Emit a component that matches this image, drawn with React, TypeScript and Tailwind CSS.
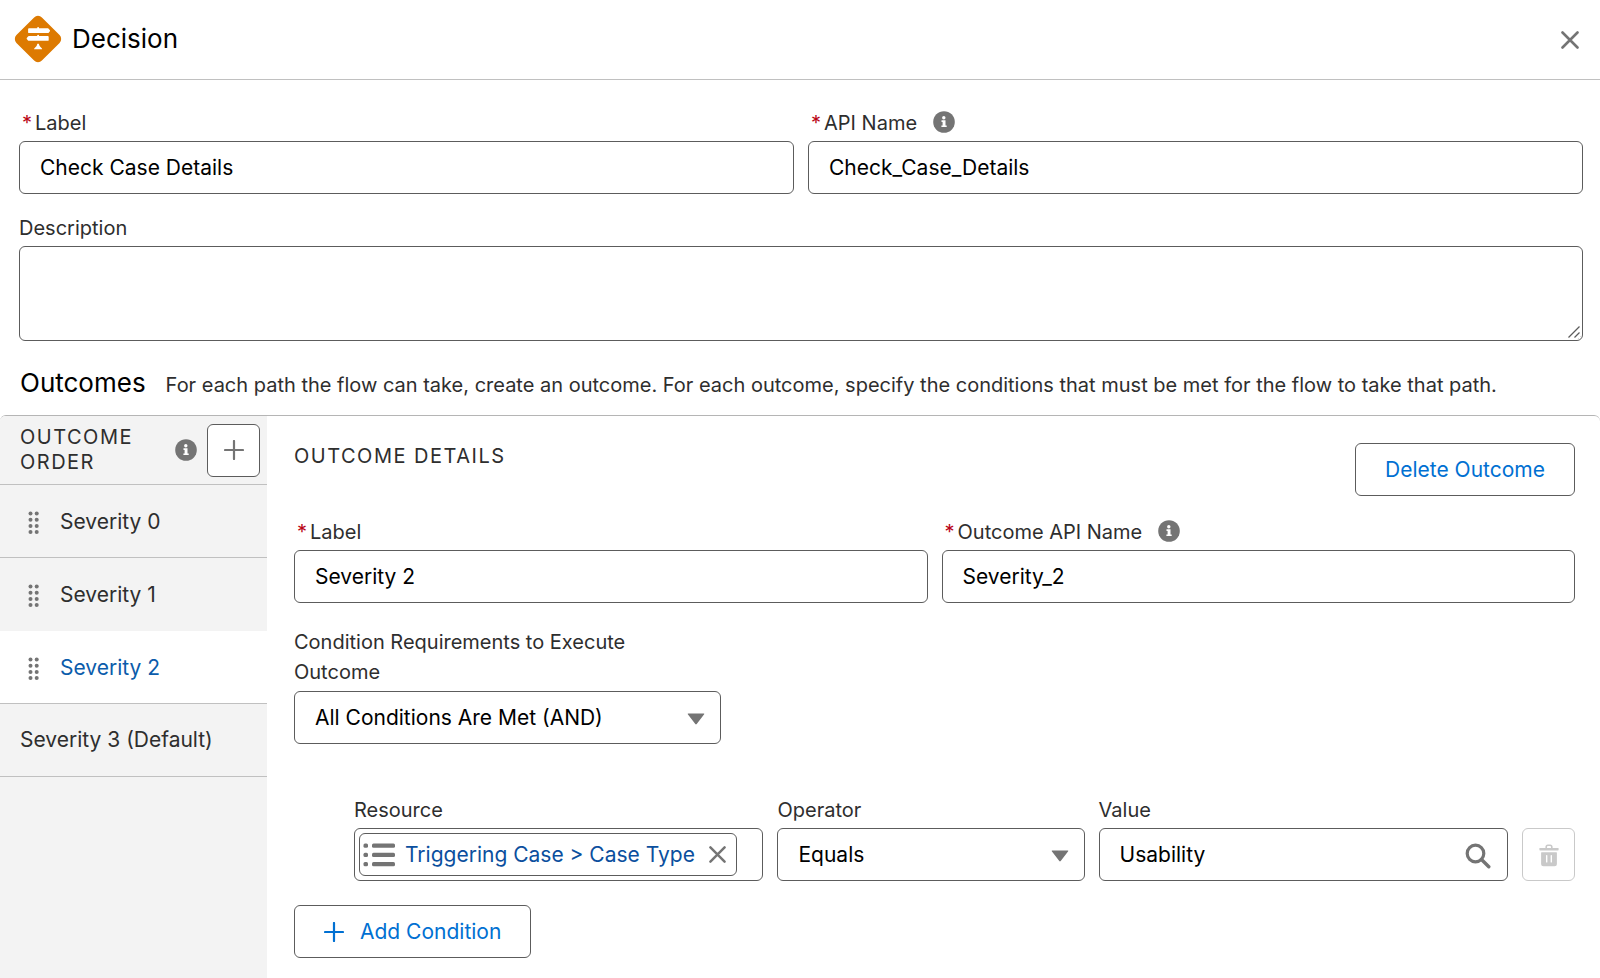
import { useState } from "react";
import type { ReactNode } from "react";

const control =
  "h-[53px] w-full rounded-md border border-[#5c5c5c] bg-white px-5 text-[21px] text-black outline-none focus:border-[#0b5cab]";

function InfoIcon() {
  return (
    <svg viewBox="0 0 22 22" className="size-[22px] shrink-0" role="img" aria-label="Help">
      <circle cx="11" cy="11" r="10.8" fill="#747474" />
      <circle cx="10.8" cy="6.8" r="1.7" fill="#fff" />
      <path d="M8.5 9.3h4v5.100h1.200v1.700H8.400v-1.700h1.200v-3.500H8.500z" fill="#fff" />
    </svg>
  );
}

function CrossIcon({ className }: { className: string }) {
  return (
    <svg viewBox="0 0 18 18" className={className} aria-hidden="true">
      <path d="M1.5 1.5l15 15M16.5 1.5l-15 15" stroke="#747474" strokeWidth="2.6" strokeLinecap="round" />
    </svg>
  );
}

function PlusIcon() {
  return (
    <svg viewBox="0 0 20 20" className="size-5 shrink-0" aria-hidden="true">
      <path d="M10 1v18M1 10h18" stroke="currentColor" strokeWidth="2.2" strokeLinecap="round" />
    </svg>
  );
}

function GripIcon() {
  return (
    <svg viewBox="0 0 12 24" className="mt-0.5 h-6 w-3 shrink-0" fill="#747474" aria-hidden="true">
      {[2.5, 8.7, 14.9, 21.1].map((y) => (
        <g key={y}>
          <circle cx="2.5" cy={y} r="2" />
          <circle cx="8.7" cy={y} r="2" />
        </g>
      ))}
    </svg>
  );
}

function DecisionIcon() {
  return (
    <svg viewBox="0 0 48 48" className="size-12 shrink-0" aria-hidden="true">
      <rect x="6" y="6" width="36" height="36" rx="5.5" fill="#dd7a01" transform="rotate(45 24 24)" />
      <g fill="#fff">
        <path d="M15 13.300h8.200v-.5q0-.8.900-.8t.9.800v.5h8.900q.5 0 .8.400l1.200 1.500q.4.500 0 1l-1.200 1.500q-.3.400-.8.400H15q-.9 0-.9-.9v-3q0-.9.9-.9z" />
        <path d="M14.800 21h8.400v-.5q0-.8.900-.8t.9.800v.5h8.800q.9 0 .9.900v3q0 .9-.9.900h-19q-.5 0-.8-.4l-1.200-1.500q-.4-.5 0-1l1.200-1.500q.3-.4.800-.4z" />
        <path d="M23.400 28.800h1.400q.4 2.700 2.700 4.100.6.400.6 1v.4h-8v-.4q0-.6.600-1 2.300-1.400 2.700-4.100z" />
      </g>
    </svg>
  );
}

function Field({ id, label, required, info, children }: { id: string; label: string; required?: boolean; info?: boolean; children: ReactNode }) {
  return (
    <div className="min-w-0">
      <div className="flex h-[30px] items-start gap-4">
        <label htmlFor={id} className={required ? "pl-[3px] text-xl leading-6" : "text-xl leading-6"}>
          {required && <span className="mr-[3px] text-[#ba0517]">*</span>}
          {label}
        </label>
        {info && <InfoIcon />}
      </div>
      {children}
    </div>
  );
}

function Select({ id, value }: { id: string; value: string }) {
  return (
    <div className="relative">
      <select id={id} className={`${control} appearance-none pr-12`} defaultValue={value}>
        <option>{value}</option>
      </select>
      <svg viewBox="0 0 18 12" className="pointer-events-none absolute top-[22px] right-4 h-3 w-[18px]" aria-hidden="true">
        <path d="M1.200.5h15.600q.8 0 .4.700l-7.500 9.800q-.7.800-1.400 0L.8 1.200q-.4-.7.400-.7z" fill="#747474" />
      </svg>
    </div>
  );
}

const outcomes = ["Severity 0", "Severity 1", "Severity 2"];

export default function App() {
  const [selected, setSelected] = useState("Severity 2");

  return (
    <main className="flex min-h-screen flex-col bg-white font-['Inter','Liberation_Sans',sans-serif] text-[#2e2e2e]">
      <header className="flex h-20 items-center border-b border-[#c0c0c0] pr-[21px] pb-0.5 pl-[14px]">
        <DecisionIcon />
        <h1 className="ml-2.5 text-[26px] text-black">Decision</h1>
        <button type="button" aria-label="Close" className="ml-auto pt-0.5">
          <CrossIcon className="size-[18px]" />
        </button>
      </header>

      <section className="flex flex-col gap-[22px] pt-[31px] pr-[17px] pl-[19px]">
        <div className="grid grid-cols-2 gap-[14px]">
          <Field id="label" label="Label" required>
            <input id="label" className={control} defaultValue="Check Case Details" />
          </Field>
          <Field id="api-name" label="API Name" required info>
            <input id="api-name" className={control} defaultValue="Check_Case_Details" />
          </Field>
        </div>
        <Field id="description" label="Description">
          <div className="relative">
            <textarea id="description" className="block h-[95px] w-full rounded-md border border-[#5c5c5c] bg-white px-5 py-3 text-[21px] text-black outline-none" />
            <svg viewBox="0 0 14 14" className="pointer-events-none absolute right-0.5 bottom-0.5 size-[14px] rounded-br bg-white" aria-hidden="true">
              <path d="M1.500 12.500L12.500 1.500M7.500 12.500l5-5" stroke="#5c5c5c" strokeWidth="1.3" />
            </svg>
          </div>
        </Field>
      </section>

      <div className="flex items-baseline gap-5 px-5 pt-6 pb-[14px]">
        <h2 className="text-[26px] leading-9 text-black">Outcomes</h2>
        <p className="text-xl">
          For each path the flow can take, create an outcome. For each outcome, specify the conditions that must be met for the flow to take that path.
        </p>
      </div>

      <div className="flex flex-1 overflow-hidden rounded-t-md border-t border-[#b5b5b5]">
        <aside className="w-[267px] shrink-0 bg-[#f3f3f3]">
          <div className="flex h-[69px] items-center border-b border-[#c0c0c0] pr-[7px] pl-5">
            <h3 className="flex-1 text-xl leading-[25px] tracking-[0.075em] uppercase">Outcome Order</h3>
            <InfoIcon />
            <button type="button" aria-label="Add outcome" className="ml-2.5 flex size-[53px] items-center justify-center rounded-md border border-[#5c5c5c] bg-white text-[#747474]">
              <PlusIcon />
            </button>
          </div>
          <ul>
            {outcomes.map((name) => (
              <li key={name}>
                <button
                  type="button"
                  onClick={() => setSelected(name)}
                  className={
                    name === selected
                      ? "flex h-[73px] w-full items-center gap-5 border-b border-[#c0c0c0] bg-white pt-0.5 pl-7 text-[21px] text-[#0b5cab]"
                      : "flex h-[73px] w-full items-center gap-5 border-b border-[#c0c0c0] pt-0.5 pl-7 text-[21px] [li:has(+li>.bg-white)>&]:border-transparent"
                  }
                >
                  <GripIcon />
                  {name}
                </button>
              </li>
            ))}
            <li>
              <button type="button" className="flex h-[73px] w-full items-center border-b border-[#c0c0c0] pl-5 text-[21px]">
                Severity 3 (Default)
              </button>
            </li>
          </ul>
        </aside>

        <section className="min-w-0 flex-1 pt-[27px] pr-[25px] pb-5 pl-[27px]">
          <div className="flex items-start justify-between">
            <h3 className="text-xl leading-[26px] tracking-[0.075em] uppercase">Outcome Details</h3>
            <button type="button" className="h-[53px] rounded-md border border-[#5c5c5c] px-[29px] text-[21px] text-[#0070d2]">
              Delete Outcome
            </button>
          </div>

          <div className="mt-6 grid grid-cols-2 gap-[14px]">
            <Field id="outcome-label" label="Label" required>
              <input id="outcome-label" className={control} defaultValue="Severity 2" />
            </Field>
            <Field id="outcome-api-name" label="Outcome API Name" required info>
              <input id="outcome-api-name" className={control} defaultValue="Severity_2" />
            </Field>
          </div>

          <div className="mt-6 w-1/3">
            <label htmlFor="requirements" className="block pr-12 pb-1 text-xl leading-[30px]">
              Condition Requirements to Execute Outcome
            </label>
            <Select id="requirements" value="All Conditions Are Met (AND)" />
          </div>

          <div className="mt-[54px] flex items-end gap-[14px] pl-[60px]">
            <div className="grid min-w-0 flex-1 grid-cols-[4fr_3fr_4fr] gap-[14px]">
              <Field id="resource" label="Resource">
                <div className="flex h-[53px] items-center rounded-md border border-[#5c5c5c] px-1">
                  <span className="flex h-[43px] shrink-0 items-center rounded-md border border-[#5c5c5c] pr-2.5 pl-[3px]">
                    <svg viewBox="0 0 32 24" className="h-6 w-8 shrink-0" fill="#747474" aria-hidden="true">
                      {[0.5, 9.8, 19].map((y) => (
                        <g key={y}>
                          <rect x="0.5" y={y} width="4.5" height="4.3" rx="1.5" />
                          <rect x="9" y={y} width="23" height="4.3" rx="1.5" />
                        </g>
                      ))}
                    </svg>
                    <a href="#resource" className="ml-2.5 text-[21px] text-[#0b4f9e]">Triggering Case &gt; Case Type</a>
                    <button type="button" aria-label="Remove resource" className="ml-[14px]">
                      <CrossIcon className="size-[17px]" />
                    </button>
                  </span>
                  <input id="resource" className="w-0 min-w-0 flex-1 outline-none" />
                </div>
              </Field>
              <Field id="operator" label="Operator">
                <Select id="operator" value="Equals" />
              </Field>
              <Field id="value" label="Value">
                <div className="relative">
                  <input id="value" className={control} defaultValue="Usability" />
                  <svg viewBox="0 0 26 26" className="pointer-events-none absolute top-[15px] right-[17px] size-[26px]" fill="none" stroke="#747474" aria-hidden="true">
                    <circle cx="10.5" cy="10.5" r="8.3" strokeWidth="3.2" />
                    <path d="M16.5 16.5l7.300 7.300" strokeWidth="3.4" strokeLinecap="round" />
                  </svg>
                </div>
              </Field>
            </div>
            <button type="button" disabled aria-label="Delete condition" className="flex size-[53px] shrink-0 items-center justify-center rounded-md border border-[#c9c9c9]">
              <svg viewBox="0 0 20 24" className="h-6 w-5" fill="#c9c9c9" aria-hidden="true">
                <path d="M1 5h18q.6 0 .6.600v1.200q0 .6-.6.600H1q-.6 0-.6-.6V5.600Q.4 5 1 5z" />
                <path d="M7.200 5.500V4q0-1.700 1.700-1.700h2.200q1.700 0 1.700 1.700v1.500" fill="none" stroke="#c9c9c9" strokeWidth="1.600" />
                <path fillRule="evenodd" d="M2.600 9.200h14.800q.5 0 .5.500v11q0 2.500-2.500 2.500H4.600q-2.500 0-2.500-2.500v-11q0-.5.500-.5zM7 12.600v6.400q0 .6.700.6t.7-.6v-6.400q0-.6-.7-.6t-.7.600zM11.600 12.600v6.400q0 .6.700.6t.7-.6v-6.400q0-.6-.7-.6t-.7.600z" />
              </svg>
            </button>
          </div>

          <button type="button" className="mt-6 flex h-[53px] items-center gap-4 rounded-md border border-[#5c5c5c] px-[29px] text-[21px] text-[#0070d2]">
            <PlusIcon />
            Add Condition
          </button>
        </section>
      </div>
    </main>
  );
}
